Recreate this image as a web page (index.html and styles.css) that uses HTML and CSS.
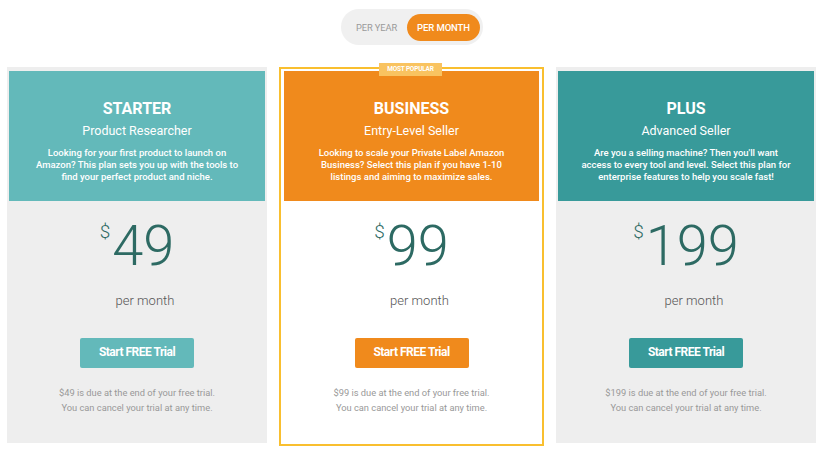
FILE: index.html
```html
<!DOCTYPE html>
<html lang="en">
<head>
<meta charset="utf-8">
<title>Pricing</title>
<link rel="stylesheet" href="styles.css">
</head>
<body>
<div class="toggle-wrap">
  <div class="toggle">
    <span class="opt">PER YEAR</span>
    <span class="opt active">PER MONTH</span>
  </div>
</div>
<div class="plans">
  <div class="plan starter">
    <div class="head">
      <h2 class="title">STARTER</h2>
      <div class="sub">Product Researcher</div>
      <p class="desc">Looking for your first product to launch on<br>Amazon? This plan sets you up with the tools to<br>find your perfect product and niche.</p>
    </div>
    <div class="body">
      <div class="price"><span class="cur">$</span><span class="amt">49</span></div>
      <div class="per">per month</div>
      <a class="btn" href="#">Start FREE Trial</a>
      <p class="note">$49 is due at the end of your free trial.<br>You can cancel your trial at any time.</p>
    </div>
  </div>
  <div class="plan business">
    <span class="badge">MOST POPULAR</span>
    <div class="head">
      <h2 class="title">BUSINESS</h2>
      <div class="sub">Entry-Level Seller</div>
      <p class="desc">Looking to scale your Private Label Amazon<br>Business? Select this plan if you have 1-10<br>listings and aiming to maximize sales.</p>
    </div>
    <div class="body">
      <div class="price"><span class="cur">$</span><span class="amt">99</span></div>
      <div class="per">per month</div>
      <a class="btn" href="#">Start FREE Trial</a>
      <p class="note">$99 is due at the end of your free trial.<br>You can cancel your trial at any time.</p>
    </div>
  </div>
  <div class="plan plus">
    <div class="head">
      <h2 class="title">PLUS</h2>
      <div class="sub">Advanced Seller</div>
      <p class="desc">Are you a selling machine? Then you'll want<br>access to every tool and level. Select this plan for<br>enterprise features to help you scale fast!</p>
    </div>
    <div class="body">
      <div class="price"><span class="cur">$</span><span class="amt">199</span></div>
      <div class="per">per month</div>
      <a class="btn" href="#">Start FREE Trial</a>
      <p class="note">$199 is due at the end of your free trial.<br>You can cancel your trial at any time.</p>
    </div>
  </div>
</div>
</body>
</html>
```
FILE: styles.css
```css
* { box-sizing: border-box; }
html, body { margin: 0; padding: 0; background: #ffffff; }
body {
  font-family: Roboto, "Liberation Sans", Arial, sans-serif;
  width: 824px;
  height: 453px;
  overflow: hidden;
}

.toggle-wrap {
  display: flex;
  justify-content: center;
  padding-top: 9px;
}
.toggle {
  display: flex;
  align-items: center;
  height: 36px;
  padding: 0 3px 0 15px;
  background: #f0f0f0;
  border-radius: 18px;
  gap: 10px;
}
.opt {
  font-size: 9.3px;
  color: #9a9a9a;
  letter-spacing: -0.1px;
}
.opt.active {
  display: flex;
  align-items: center;
  justify-content: center;
  width: 73px;
  height: 27px;
  margin-top: 1px;
  border-radius: 14px;
  background: #f08a1c;
  color: #ffffff;
  font-size: 9.5px;
  font-weight: 500;
}

.plans {
  display: flex;
  justify-content: flex-start;
  align-items: flex-start;
  gap: 12px;
  margin-top: 22px;
  padding-left: 7px;
}
.plan {
  position: relative;
  width: 260px;
  height: 376px;
  padding: 4px 2px 0;
  background: #eeeeee;
  text-align: center;
}
.plan.business {
  width: 265px;
  height: 379px;
  padding: 2px 3px 0;
  background: #ffffff;
  border: 2px solid #f9bf2f;
}
.badge {
  position: absolute;
  left: 98px;
  top: -6px;
  width: 63px;
  height: 13px;
  background: #f9c360;
  color: #ffffff;
  font-size: 6.5px;
  font-weight: 700;
  line-height: 13px;
  letter-spacing: -0.2px;
}

.head {
  height: 130px;
  padding-top: 28px;
  color: #ffffff;
}
.starter .head { background: #63b9ba; }
.business .head { background: #f08a1c; }
.plus .head { background: #389a9a; }

.title {
  margin: 0;
  font-size: 16px;
  line-height: 20px;
  font-weight: 700;
}
.sub {
  margin-top: 4px;
  font-size: 12.5px;
  line-height: 16px;
}
.desc {
  margin: 8px 0 0;
  font-size: 9.5px;
  line-height: 11.8px;
  font-weight: 500;
}

.body {
  display: flex;
  flex-direction: column;
  align-items: center;
}
.price {
  display: flex;
  align-items: flex-start;
  margin-top: 12.5px;
  color: #2d6a63;
}
.cur {
  margin-top: 8px;
  margin-right: 2px;
  font-size: 19px;
  line-height: 20px;
  font-weight: 300;
}
.amt {
  font-size: 56px;
  line-height: 64px;
  font-weight: 300;
}
.per {
  margin-top: 15.5px;
  padding-left: 16px;
  font-size: 13px;
  line-height: 16px;
  font-weight: 300;
  color: #555555;
}
.btn {
  display: block;
  margin-top: 29px;
  width: 114px;
  height: 30px;
  padding-bottom: 2px;
  border-radius: 2px;
  color: #ffffff;
  text-decoration: none;
  font-size: 12px;
  font-weight: 700;
  line-height: 28px;
  letter-spacing: -0.5px;
}
.starter .btn { background: #63b9ba; }
.business .btn { background: #f08a1c; }
.plus .btn { background: #389a9a; }
.note {
  margin: 16.5px 0 0;
  font-size: 9.3px;
  line-height: 15.3px;
  color: #999999;
}
```
